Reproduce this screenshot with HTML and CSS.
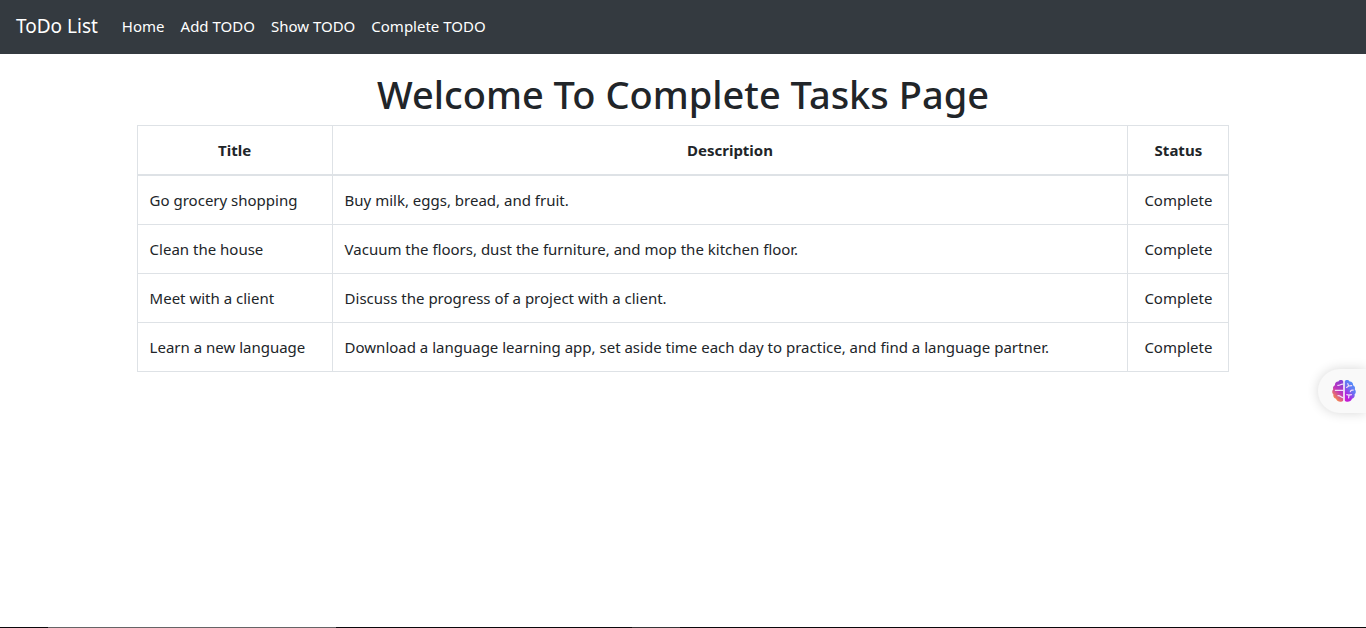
FILE: index.html
```html
<!DOCTYPE html>
<html lang="en">
<head>
<meta charset="utf-8">
<meta name="viewport" content="width=device-width, initial-scale=1">
<title>Complete Tasks</title>
<link rel="stylesheet" href="styles.css">
</head>
<body>
<nav class="navbar">
  <a class="brand" href="#">ToDo List</a>
  <ul class="nav-list">
    <li><a class="nav-link" href="#">Home</a></li>
    <li><a class="nav-link" href="#">Add TODO</a></li>
    <li><a class="nav-link" href="#">Show TODO</a></li>
    <li><a class="nav-link" href="#">Complete TODO</a></li>
  </ul>
</nav>
<main class="content">
  <h1 class="page-title">Welcome To Complete Tasks Page</h1>
  <table class="tasks">
    <colgroup><col class="col-title"><col><col class="col-status"></colgroup>
    <thead>
      <tr><th scope="col">Title</th><th scope="col">Description</th><th scope="col">Status</th></tr>
    </thead>
    <tbody>
      <tr><td>Go grocery shopping</td><td>Buy milk, eggs, bread, and fruit.</td><td class="status">Complete</td></tr>
      <tr><td>Clean the house</td><td>Vacuum the floors, dust the furniture, and mop the kitchen floor.</td><td class="status">Complete</td></tr>
      <tr><td>Meet with a client</td><td>Discuss the progress of a project with a client.</td><td class="status">Complete</td></tr>
      <tr><td>Learn a new language</td><td>Download a language learning app, set aside time each day to practice, and find a language partner.</td><td class="status">Complete</td></tr>
    </tbody>
  </table>
</main>
<button class="assistant" type="button" aria-label="Open assistant">
  <svg class="brain" viewBox="0 0 24 24" aria-hidden="true">
    <defs>
      <linearGradient id="left" x1="0.7" y1="0" x2="0.2" y2="1">
        <stop offset="0" stop-color="#8a3fd6"/><stop offset="0.45" stop-color="#c035bd"/><stop offset="0.9" stop-color="#fb8f45"/>
      </linearGradient>
      <linearGradient id="right" x1="0.8" y1="0" x2="0.2" y2="1">
        <stop offset="0" stop-color="#4a9dfb"/><stop offset="0.45" stop-color="#6a72f2"/><stop offset="0.8" stop-color="#b320e0"/><stop offset="1" stop-color="#c81bd2"/>
      </linearGradient>
    </defs>
    <path fill="url(#left)" d="M11.2 2.2C10.6 0.8 7.6 0.4 6.4 2.4 4 2.2 2.600 4.200 3 6.200 1.200 7 0.600 8.800 1.200 10.200-0.200 11.600-0.100 14.200 1.400 15.200 0.900 17.400 2 19.400 4 19.800 4.800 22.800 9.600 24 11.200 21.400Z"/>
    <path fill="url(#right)" d="M12.800 2.200C13.400 0.800 16.400 0.400 17.600 2.400 20 2.200 21.400 4.200 21 6.200 22.800 7 23.400 8.800 22.800 10.200 24.200 11.600 24.100 14.200 22.600 15.200 23.100 17.400 22 19.400 20 19.800 19.200 22.800 14.400 24 12.800 21.400Z"/>
    <g fill="none" stroke="#f2dcfa" stroke-width="1.200" stroke-linecap="round">
      <path d="M11.200 5.200C8.800 4.800 8.200 6.600 5.800 6.400M3.400 11.400H11.200M11.200 18.600C9 18.600 8.800 16.400 6 16.600"/>
      <path d="M15.800 4.600 16.600 7 14.600 8.400M16.600 7 19.600 6.600M21.200 11.200C19.600 10.800 18.600 11.600 18.400 12.600M14.800 15.600 17 16.200 16.600 18.800M17 16.200 19.400 15.600"/>
    </g>
  </svg>
</button>
<div class="bottom-edge" aria-hidden="true"><span class="edge-search"></span><span class="edge-active"></span></div>
</body>
</html>
```
FILE: styles.css
```css
* {
  box-sizing: border-box;
}

body {
  margin: 0;
  min-height: 100vh;
  display: flex;
  flex-direction: column;
  background: #fff;
  color: #212529;
  font-family: "Segoe UI", "Noto Sans", "Open Sans", sans-serif;
  font-size: 15px;
  line-height: 24px;
}

.navbar {
  display: flex;
  align-items: center;
  gap: 16px;
  padding: 6px 16px 8px;
  background: #343a40;
}

.brand,
.nav-link {
  color: #fff;
  text-decoration: none;
  white-space: nowrap;
}

.brand {
  font-size: 19px;
  line-height: 30px;
}

.nav-list {
  display: flex;
  margin: 0;
  padding: 0;
  list-style: none;
}

.nav-link {
  display: block;
  padding: 8px;
}

.content {
  width: 80%;
  margin: 0 auto;
}

.page-title {
  margin: 16px 0 7px;
  font-size: 38px;
  font-weight: 500;
  line-height: 48px;
  text-align: center;
}

.tasks {
  width: 100%;
  table-layout: fixed;
  border-collapse: collapse;
}

.col-title {
  width: 195px;
}

.col-status {
  width: 101px;
}

.tasks th,
.tasks td {
  padding: 12px;
  border: 1px solid #dee2e6;
  text-align: left;
}

.tasks th {
  border-bottom-width: 2px;
  font-weight: 700;
}

.tasks th,
.tasks .status {
  text-align: center;
}

.assistant {
  position: fixed;
  right: 0;
  top: 369px;
  display: flex;
  align-items: center;
  width: 48px;
  height: 44px;
  padding: 0 10px 0 14px;
  border: 0;
  border-radius: 22px 0 0 22px;
  background: #f9f9f9;
  box-shadow: 0 0 12px rgba(0, 0, 0, 0.16);
}

.brain {
  width: 24px;
  height: 24px;
}

.bottom-edge {
  display: flex;
  gap: 296px;
  height: 1px;
  margin-top: auto;
  padding-left: 48px;
  background: #0b080b;
}

.edge-search {
  width: 288px;
  background: #666466;
}

.edge-active {
  width: 48px;
  background: #363436;
}
```
